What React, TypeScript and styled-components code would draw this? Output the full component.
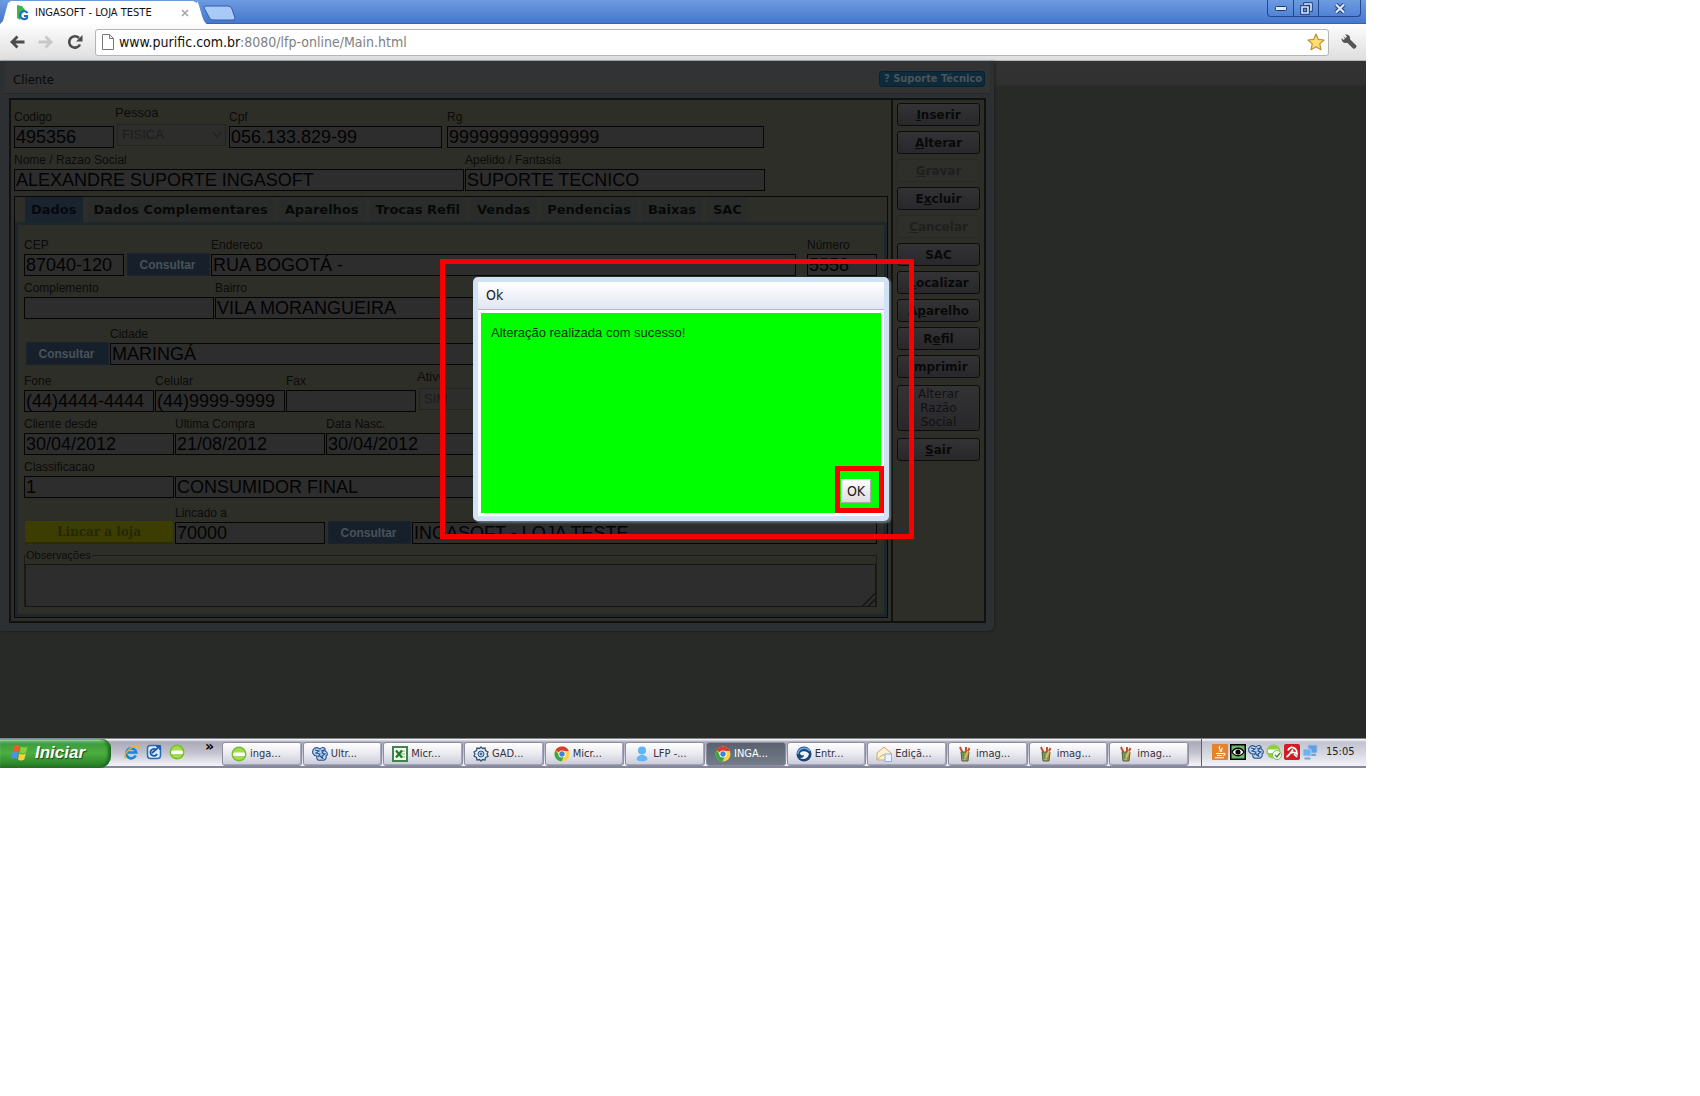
import React, { useId } from "react";
import styled, { createGlobalStyle, css } from "styled-components";

const ui = `"DejaVu Sans Condensed", "Noto Sans", sans-serif`;
const arial = `"Liberation Sans", Arial, sans-serif`;
const verdana = `"DejaVu Sans", Verdana, sans-serif`;

const GlobalStyle = createGlobalStyle`
  * { box-sizing: border-box; }
  body { margin: 0; background: #fff; font-family: ${arial}; }
  button, input, select, textarea { margin: 0; border-radius: 0; }
`;

const Desktop = styled.div`
  width: 100%;
  max-width: 1366px;
  background: #272a26;
`;

/* ---------- browser chrome ---------- */

const PlainButton = styled.button`
  display: flex;
  align-items: center;
  justify-content: center;
  padding: 0;
  border: 0;
  background: none;
`;

const TabStrip = styled.div`
  display: flex;
  align-items: flex-end;
  height: 24px;
  background: linear-gradient(#6d9be0, #4677cf);
  border-bottom: 1px solid #3a63ae;
`;

const BrowserTab = styled.div`
  display: flex;
  align-items: center;
  gap: 6px;
  width: 197px;
  height: 24px;
  margin-bottom: -1px;
  padding: 2px 8px 0 16px;
  background: #fff;
  clip-path: polygon(0 100%, 3px 88%, 8px 12%, 11px 4%, 193px 4%, 197px 12%, 100% 100%);
  font: 11px/14px ${ui};
  color: #111;
`;

const TabTitle = styled.span`
  flex: 1;
  white-space: nowrap;
`;

const TabFlare = styled.svg`
  flex: none;
  margin-bottom: -1px;
`;

const NewTab = styled(PlainButton)`
  align-self: flex-start;
  padding-top: 5px;
  margin-left: -4px;
`;

const WindowControls = styled.div`
  display: flex;
  align-self: flex-start;
  margin: 0 5px 0 auto;
  height: 17px;
  border: 1px solid #23478c;
  border-top: 0;
  border-radius: 0 0 4px 4px;
`;

const WindowControl = styled(PlainButton)<{ $wide?: boolean }>`
  width: ${(p) => (p.$wide ? 42 : 25)}px;
  & + & { border-left: 1px solid #23478c; }
`;

const Toolbar = styled.div`
  display: flex;
  align-items: center;
  gap: 11px;
  height: 37px;
  padding: 0 8px;
  background: linear-gradient(#fdfdfd, #dedede);
  border-bottom: 1px solid #b5b9b9;
`;

const Tool = styled(PlainButton)`
  width: 18px;
  height: 26px;
`;

const Omnibox = styled.div`
  display: flex;
  flex: 1;
  align-items: center;
  gap: 5px;
  height: 27px;
  padding: 0 3px 0 6px;
  background: #fff;
  border: 1px solid #b4b4b4;
  border-radius: 3px;
`;

const Address = styled.a`
  flex: 1;
  font: 14px/20px ${ui};
  color: #808080;
  text-decoration: none;
  white-space: nowrap;
  b { font-weight: 400; color: #111; }
`;

/* ---------- page ---------- */

const Page = styled.main`
  position: relative;
  padding-bottom: 107px;
  background: linear-gradient(#333 0, #303030 24px, #272a26 25px);
`;

const Window = styled.section`
  max-width: 994px;
  padding: 0 8px 8px 9px;
  background: #2c3033;
  border-radius: 0 0 6px 0;
  box-shadow: 1px 1px 3px #1d201e;
`;

const WindowHeader = styled.header`
  display: flex;
  align-items: center;
  justify-content: space-between;
  height: 33px;
  margin: 0 -4px 4px;
  padding: 3px 5px 0 8px;
  background: linear-gradient(#313335, #333);
  border-bottom: 1px solid #25282a;
`;

const WindowTitle = styled.h1`
  margin: 2px 0 0;
  font: 13px/16px ${ui};
  color: #090909;
`;

const Support = styled.button`
  height: 16px;
  padding: 0 2px 0 4px;
  border: 1px solid #0b202e;
  border-radius: 3px;
  background: #0e2b3d;
  font: bold 11px/14px ${ui};
  color: #4b5457;
`;

const Frame = styled.div`
  display: flex;
  border: 2px solid #11110f;
  background: #2e2e28;
`;

const Content = styled.div`
  flex: 1;
  min-width: 0;
  padding: 5px 3px 3px;
`;

const Sidebar = styled.nav`
  display: flex;
  flex-direction: column;
  gap: 5px;
  width: 93px;
  padding: 3px 4px;
  border-left: 2px solid #11110f;
`;

const Action = styled.button<{ $tall?: boolean }>`
  height: ${(p) => (p.$tall ? 46 : 23)}px;
  margin: ${(p) => (p.$tall ? "2px 0" : "0")};
  padding: ${(p) => (p.$tall ? "0 14px" : "0")};
  border: 1px solid #0d0d0d;
  border-radius: 3px;
  background: linear-gradient(#333335, #28282a);
  font: ${(p) => (p.$tall ? "12px/14px" : "bold 12px/14px")} ${verdana};
  color: ${(p) => (p.$tall ? "#111" : "#090909")};
  &:disabled {
    border-color: #292926;
    background: #2e2e2b;
    color: #1f1f1d;
  }
`;

const Row = styled.div<{ $space?: number; $gap?: number }>`
  display: flex;
  align-items: flex-end;
  gap: ${(p) => p.$gap ?? 1}px;
  margin-top: ${(p) => p.$space ?? 0}px;
`;

const FieldBox = styled.div<{ $w?: number; $start?: number }>`
  display: flex;
  flex-direction: column;
  ${(p) => (p.$w ? css`width: ${p.$w}px;` : css`flex: 1; min-width: 0;`)}
  margin-left: ${(p) => p.$start ?? 0}px;
`;

const Label = styled.label`
  height: 21px;
  font: 12px/25px ${arial};
  color: #0b0b0a;
  white-space: nowrap;
`;

const TextInput = styled.input`
  width: 100%;
  height: 22px;
  padding: 0 0 0 1px;
  border: 1px solid #050505;
  background: #2d2d2d;
  font: 18px/20px ${arial};
  color: #030303;
  outline: 0;
`;

const SelectBox = styled(FieldBox)`
  padding-bottom: 2px;
  ${Label} { height: 19px; line-height: 16px; font-size: 13px; margin-left: -2px; }
`;

const SelectInput = styled.select`
  appearance: none;
  width: 100%;
  height: 22px;
  padding: 0 4px;
  border: 1px solid #23231f;
  background: #2d2d2c;
  font: 13px/18px ${arial};
  color: #1c1c1c;
  opacity: 1;
`;

const SelectWrap = styled.div`
  display: grid;
  align-items: center;
  > * { grid-area: 1 / 1; }
  svg { justify-self: end; margin-right: 4px; pointer-events: none; }
`;

const Lookup = styled.button`
  width: 83px;
  height: 23px;
  margin: 0 0 0 2px;
  padding: 0 2px 0 0;
  border: 1px solid #19232d;
  background: #17202a;
  font: bold 12px/16px ${arial};
  color: #47525b;
`;

const LinkStore = styled.button`
  width: 148px;
  height: 23px;
  margin: 0 1px;
  padding: 0;
  border: 0;
  border-bottom: 2px solid #2d2c08;
  background: #3c3d00;
  font: bold 12px/16px "DejaVu Serif", serif;
  color: #25280a;
`;

const TabBox = styled.div`
  margin-top: 5px;
  border: 1px solid #080908;
`;

const Tabs = styled.div`
  display: flex;
  gap: 5px;
  height: 25px;
  padding-left: 10px;
`;

const PageTab = styled.button<{ $active?: boolean }>`
  padding: 0 6px;
  border: 0;
  background: ${(p) => (p.$active ? "#19242f" : "#2a2c2b")};
  font: bold 13px/24px ${verdana};
  color: ${(p) => (p.$active ? "#05090f" : "#080808")};
  white-space: nowrap;
`;

const Panel = styled.div`
  padding: 8px 7px 7px 6px;
  border: 3px solid #1d272b;
`;

const Notes = styled.fieldset`
  min-width: 0;
  margin: 5px 0 0;
  padding: 3px 0 0;
  border: 1px solid #1b1b18;
  border-bottom: 0;
  legend {
    padding: 0 1px;
    font: 11px/12px ${arial};
    color: #0c0c0b;
  }
`;

const NotesInput = styled.textarea`
  display: block;
  width: 100%;
  height: 43px;
  border: 1px solid #161616;
  background: #2d2d2d;
  resize: vertical;
  outline: 0;
  &::-webkit-resizer {
    background: linear-gradient(135deg, #2d2d2d 55%, #151515 55%, #151515 62%, #2d2d2d 62%, #2d2d2d 75%, #151515 75%, #151515 82%, #2d2d2d 82%);
  }
`;

/* ---------- message dialog ---------- */

const Overlay = styled.div`
  position: absolute;
  inset: 0;
  display: flex;
  align-items: center;
  justify-content: center;
  padding: 0 4px 2px 0;
`;

const Dialog = styled.section`
  position: relative;
  width: 416px;
  padding: 5px;
  background: #d0e2f3;
  border-radius: 5px;
  box-shadow: 2px 2px 2px #667078;
`;

const DialogHeader = styled.h2`
  margin: 0;
  padding: 0 8px;
  border-bottom: 1px solid #b4b8c8;
  background: linear-gradient(#fff, #e2e6f2);
  font: 14px/27px ${ui};
  color: #222;
`;

const DialogBody = styled.div`
  padding: 3px;
  background: #fff;
`;

const Message = styled.div`
  position: relative;
  display: flex;
  flex-direction: column;
  justify-content: space-between;
  min-height: 200px;
  padding: 10px;
  background: #0f0;
  font: 13px/20px ${arial};
  color: #063006;
  p { margin: 0; }
`;

const OkButton = styled.button`
  align-self: flex-end;
  width: 30px;
  height: 24px;
  padding: 0;
  border: 1px solid;
  border-color: #eee #a8a8ac #a8a8ac #eee;
  background: linear-gradient(#fff, #dcdce2);
  font: 14px/20px ${ui};
  color: #222;
`;

const Highlight = styled.span<{ $inset: string }>`
  position: absolute;
  inset: ${(p) => p.$inset};
  border: 5px solid #f90000;
  pointer-events: none;
`;

/* ---------- taskbar ---------- */

const Taskbar = styled.footer`
  display: flex;
  height: 30px;
  border-top: 1px solid #83838f;
  border-bottom: 2px solid #85889c;
  background: linear-gradient(#fff 0, #a9a9b8 3px, #c4c4d0 14px, #f2f2f6 26px);
`;

const Start = styled.button`
  display: flex;
  align-items: center;
  gap: 6px;
  width: 111px;
  height: 29px;
  padding: 0 0 2px 11px;
  border: 0;
  border-radius: 0 9px 12px 0;
  background: linear-gradient(#7fc77d 0, #3e9e3e 5px, #4bae3f 14px, #348f2f 23px, #257224);
  box-shadow: inset -3px 0 3px #1d6a22, inset 0 2px 1px #a5dfa0;
  font: italic bold 17px/24px ${arial};
  color: #fff;
  text-shadow: 1px 1px 1px #1a4a18;
`;

const QuickLaunch = styled.div`
  display: flex;
  align-items: center;
  gap: 7px;
  width: 111px;
  padding: 0 0 1px 12px;
`;

const More = styled.span`
  margin: 0 8px 12px auto;
  font: bold 14px/12px ${verdana};
  color: #000;
`;

const TaskList = styled.div`
  display: grid;
  grid-auto-flow: column;
  grid-auto-columns: 1fr;
  flex: 1;
  gap: 1px;
  min-width: 0;
  padding-top: 3px;
`;

const Task = styled.button<{ $active?: boolean }>`
  display: flex;
  align-items: center;
  gap: 3px;
  min-width: 0;
  height: 24px;
  padding: 0 0 0 8px;
  border: 1px solid #8d8fa0;
  border-radius: 3px;
  background: ${(p) =>
    p.$active ? "linear-gradient(#5a6270, #747c8a)" : "linear-gradient(#fff, #e6e6ee 12px, #c9cad9)"};
  box-shadow: ${(p) => (p.$active ? "none" : "inset -1px -1px 0 #a3a5b8")};
  font: 11px/16px ${ui};
  color: ${(p) => (p.$active ? "#fff" : "#33333b")};
  white-space: nowrap;
  svg { flex: none; }
`;

const Tray = styled.div`
  display: flex;
  align-items: center;
  gap: 2px;
  width: 165px;
  margin-left: 12px;
  padding: 0 0 1px 10px;
  border-left: 1px solid #5f6070;
  background: linear-gradient(#fff 0, #c3c3d0 3px, #d6d6e0 14px, #f0f0f5 26px);
  time {
    margin-left: 6px;
    font: 11px/16px ${ui};
    color: #222;
  }
`;

/* ---------- icons ---------- */

type IconName =
  | "ie" | "outlook" | "green" | "blob" | "excel" | "gear" | "chrome" | "person"
  | "bird" | "mail" | "cup" | "java" | "eye" | "check" | "avira" | "net";

const shapes: Record<IconName, React.ReactNode> = {
  ie: (
    <>
      <path d="M12.800 11.500A5 5 0 1 1 13.200 8.500H5" fill="none" stroke="#1c86d8" strokeWidth="2.600" />
      <path d="M2.500 14.500C-1 12 6 3 14 1.500c2-.3 1.500 2 .4 3.500" fill="none" stroke="#e8b52a" strokeWidth="1.300" />
    </>
  ),
  outlook: (
    <>
      <rect x="1.500" y="1.500" width="13" height="13" rx="3" fill="#dcebfa" stroke="#2d6cb5" strokeWidth="1.500" />
      <path d="M10.500 6A3.500 3.500 0 1 0 11 10M6 9l8-7M10 2h4v4" fill="none" stroke="#1d5ca8" strokeWidth="1.800" />
    </>
  ),
  green: (
    <>
      <circle cx="8" cy="8" r="7.500" fill="#76c225" />
      <circle cx="8" cy="8" r="6" fill="#a3dc52" />
      <rect x="2" y="6.500" width="12" height="3.500" rx="1.500" fill="#fff" />
    </>
  ),
  blob: (
    <g fill="#bcd5f1" stroke="#28538d" strokeWidth="1.100">
      <path d="M1 4C3 0 6 2 8 3c3-3 6-1 5 2 3 1 3 4 1 5 1 3-2 5-5 4-3 1-5-1-4-4C1 10 0 6 1 4z" />
      <path d="M3 4l4 1-3 2 4 1-2 3M9 5l3-1-2 3 3 1-3 2 1 3M7 9l3 3" fill="none" />
    </g>
  ),
  excel: (
    <>
      <rect x="1" y="1" width="14" height="14" fill="#f6fff4" stroke="#3f8746" strokeWidth="2" />
      <path d="M9 5h4M9 8h4M9 11h4" stroke="#7fb382" />
      <path d="M4 4.500l6 7M10 4.500l-6 7" stroke="#227a2f" strokeWidth="2.400" />
    </>
  ),
  gear: (
    <>
      <path d="M8 1l1.500 1.500L12 2l.5 2.500L15 6l-1 2 1 2.500-2.500 1L12 14l-2.500-.5L8 15l-1.500-1.500L4 14l-.5-2.500L1 10l1-2-1-2 2.500-1.500L4 2l2.500.5z" fill="#e3eef8" stroke="#35557a" strokeWidth="1.300" />
      <circle cx="8" cy="8" r="3" fill="#a9c6e0" stroke="#35557a" />
      <circle cx="8" cy="8" r="1" fill="#35557a" />
    </>
  ),
  chrome: (
    <>
      <circle cx="8" cy="8" r="7.500" fill="#fbd33a" />
      <path d="M8 8L1.500 4.250A7.500 7.500 0 0 1 14.800 5H8z" fill="#dd3b2d" />
      <path d="M1.500 4.250A7.500 7.500 0 0 0 7.500 15.500L10 10 5 9z" fill="#3aa64b" />
      <circle cx="8" cy="8" r="3.600" fill="#fff" />
      <circle cx="8" cy="8" r="2.700" fill="#3f83dd" />
    </>
  ),
  person: (
    <>
      <circle cx="8" cy="4.500" r="4" fill="#5db5f5" />
      <path d="M2.500 13.500c0-6 11-6 11 0-2 2.500-9 2.500-11 0z" fill="#62b7f4" />
    </>
  ),
  bird: (
    <>
      <circle cx="8" cy="8" r="7.500" fill="#1d4477" />
      <path d="M4 7c2-3 8-2 9 1-1 5-6 6-9 4 3 0 4-1 4-3-2 1-4 0-4-2z" fill="#eef5fc" />
      <path d="M2 8c0-6 8-8 12-3" fill="none" stroke="#5ba5e2" strokeWidth="1.800" />
    </>
  ),
  mail: (
    <>
      <path d="M1 7l7-6 7 6v7H1z" fill="#fdf1d3" stroke="#d1a765" />
      <path d="M1 14l5-5h4l5 5" fill="none" stroke="#d1a765" />
      <rect x="9" y="8" width="6.500" height="7.500" fill="#eef5ff" stroke="#8fb2dc" />
    </>
  ),
  cup: (
    <>
      <path d="M6 8L3 1M9 7V1M10 7l2.500-5" stroke="#c8502c" strokeWidth="2" />
      <path d="M4 6h8l-1 9H5z" fill="#8d9460" stroke="#5b6040" />
      <path d="M7 14l4-9" stroke="#e7b750" strokeWidth="2" />
      <path d="M6 7l1 6" stroke="#4f9a54" strokeWidth="1.500" />
    </>
  ),
  java: (
    <>
      <rect width="16" height="16" rx="1" fill="#e5822c" />
      <path d="M8 2c-3 3 2 3 0 6M10.500 4c-2 2 0 2-1 4M4 9.500h7c3-1 2 2 0 2M5 11.500h5M3 13.800h9" fill="none" stroke="#fff" strokeWidth="1.100" />
    </>
  ),
  eye: (
    <>
      <rect x=".75" y=".75" width="14.500" height="14.500" fill="#69b967" stroke="#000" strokeWidth="1.500" />
      <path d="M2 8c3-5 9-5 12 0-3 5-9 5-12 0z" fill="#fff" stroke="#000" strokeWidth="1.300" />
      <circle cx="8" cy="8" r="2.600" />
    </>
  ),
  check: (
    <>
      <circle cx="7.500" cy="7.500" r="7" fill="#8fd043" />
      <rect x="2" y="5.500" width="11" height="3.500" rx="1" fill="#fff" />
      <circle cx="11" cy="11" r="4.500" fill="#f4fff0" stroke="#78b858" />
      <path d="M9 11l2 2 3-4" fill="none" stroke="#3f8f2a" strokeWidth="1.300" />
    </>
  ),
  avira: (
    <>
      <rect width="16" height="16" rx="2" fill="#d01c22" />
      <path d="M2.500 13C6 11 7 8 9 5.500M4 6.500c2-5 9-4 9 3.500-2-2-4-2-6-1M10 10l3 3" fill="none" stroke="#fff" strokeWidth="1.700" />
    </>
  ),
  net: (
    <>
      <rect x="6" y="1" width="9" height="8" rx="1" fill="#5f9fe4" stroke="#a3c1e4" />
      <path d="M9 11h5" stroke="#7ba3d2" strokeWidth="2" />
      <rect x="1" y="5" width="8" height="7" rx="1" fill="#6fb0f0" stroke="#b5cfeb" />
      <path d="M2.500 14.500h6" stroke="#7ba3d2" strokeWidth="2" />
    </>
  ),
};

const Icon = ({ name }: { name: IconName }) => (
  <svg width="16" height="16" viewBox="0 0 16 16" aria-hidden="true">
    {shapes[name]}
  </svg>
);

const tasks: { icon: IconName; text: string; active?: boolean }[] = [
  { icon: "green", text: "inga..." },
  { icon: "blob", text: "Ultr..." },
  { icon: "excel", text: "Micr..." },
  { icon: "gear", text: "GAD..." },
  { icon: "chrome", text: "Micr..." },
  { icon: "person", text: "LFP -..." },
  { icon: "chrome", text: "INGA...", active: true },
  { icon: "bird", text: "Entr..." },
  { icon: "mail", text: "Ediçã..." },
  { icon: "cup", text: "imag..." },
  { icon: "cup", text: "imag..." },
  { icon: "cup", text: "imag..." },
];

const trayIcons: IconName[] = ["java", "eye", "blob", "check", "avira", "net"];

const pageTabs = [
  "Dados", "Dados Complementares", "Aparelhos", "Trocas Refil",
  "Vendas", "Pendencias", "Baixas", "SAC",
];

interface FieldProps {
  label: string;
  value: string;
  w?: number;
  start?: number;
  bare?: boolean;
}

function Field({ label, value, w, start, bare }: FieldProps) {
  const id = useId();
  return (
    <FieldBox $w={w} $start={start}>
      {!bare && <Label htmlFor={id}>{label}</Label>}
      <TextInput id={id} defaultValue={value} aria-label={bare ? label : undefined} />
    </FieldBox>
  );
}

function SelectField({ label, value, w, start }: FieldProps) {
  const id = useId();
  return (
    <SelectBox $w={w} $start={start}>
      <Label htmlFor={id}>{label}</Label>
      <SelectWrap>
        <SelectInput id={id} disabled defaultValue={value}>
          <option>{value}</option>
        </SelectInput>
        <svg width="10" height="8" viewBox="0 0 10 8" aria-hidden="true">
          <path d="M1 1l4 5 4-5" fill="none" stroke="#232323" strokeWidth="2" />
        </svg>
      </SelectWrap>
    </SelectBox>
  );
}

function BrowserChrome() {
  return (
    <header>
      <TabStrip>
        <BrowserTab>
          <svg width="13" height="16" viewBox="0 0 13 16" aria-hidden="true">
            <path d="M1 0l5 1 3 4-3 3-2 7-3-2z" fill="#3fb549" />
            <path d="M11.500 8A4 4 0 1 0 11 13V11H8" fill="none" stroke="#1f6fc0" strokeWidth="2.200" />
          </svg>
          <TabTitle>INGASOFT - LOJA TESTE</TabTitle>
          <PlainButton aria-label="Fechar guia">
            <svg width="8" height="8" viewBox="0 0 8 8">
              <path d="M1 1l6 6M7 1L1 7" stroke="#a2a2a2" strokeWidth="1.500" />
            </svg>
          </PlainButton>
        </BrowserTab>
        <TabFlare width="10" height="23" viewBox="0 0 10 23" aria-hidden="true">
          <path d="M0 0C3 4 5 21 10 23H0z" fill="#fff" />
        </TabFlare>
        <NewTab aria-label="Nova guia">
          <svg width="33" height="17" viewBox="0 0 33 17">
            <path d="M3 1h22q3 0 4 3l3 9q0 2-2 2H10q-3 0-4-3L1 3q0-2 2-2z" fill="#a9caf7" stroke="#315eaa" />
          </svg>
        </NewTab>
        <WindowControls>
          <WindowControl aria-label="Minimizar">
            <svg width="12" height="5" viewBox="0 0 12 5">
              <rect x=".5" y=".5" width="11" height="4" rx="1" fill="#dcebff" stroke="#1d3b74" />
            </svg>
          </WindowControl>
          <WindowControl aria-label="Restaurar">
            <svg width="13" height="13" viewBox="0 0 13 13" fill="none">
              <path d="M5 3V2h6v6h-1M2 5h6v6H2z" stroke="#1d3b74" strokeWidth="3.500" />
              <path d="M5 3V2h6v6h-1M2 5h6v6H2z" stroke="#dcebff" strokeWidth="1.600" />
            </svg>
          </WindowControl>
          <WindowControl $wide aria-label="Fechar">
            <svg width="12" height="11" viewBox="0 0 12 11">
              <path d="M2 1.500l8 8M10 1.500l-8 8" stroke="#1d3b74" strokeWidth="4" />
              <path d="M2 1.500l8 8M10 1.500l-8 8" stroke="#dcebff" strokeWidth="2.200" />
            </svg>
          </WindowControl>
        </WindowControls>
      </TabStrip>
      <Toolbar>
        <Tool aria-label="Voltar">
          <svg width="16" height="14" viewBox="0 0 16 14" fill="none" stroke="#4b4b4b" strokeWidth="2.800">
            <path d="M15.500 7H3M8.500 1.500L3 7l5.500 5.500" />
          </svg>
        </Tool>
        <Tool aria-label="Avançar">
          <svg width="16" height="14" viewBox="0 0 16 14" fill="none" stroke="#c8c8c8" strokeWidth="2.800">
            <path d="M.5 7H13M7.500 1.500L13 7l-5.500 5.500" />
          </svg>
        </Tool>
        <Tool aria-label="Recarregar">
          <svg width="16" height="16" viewBox="0 0 16 16">
            <path d="M12 4A5.700 5.700 0 1 0 13 10.500" fill="none" stroke="#4b4b4b" strokeWidth="2.600" />
            <path d="M15.500 1v6.500H9z" fill="#4b4b4b" />
          </svg>
        </Tool>
        <Omnibox>
          <svg width="12" height="16" viewBox="0 0 12 16" aria-hidden="true">
            <path d="M.5.5h7l4 4v11H.5zM7.500.5v4h4" fill="#fff" stroke="#777" />
          </svg>
          <Address href="#main">
            <b>www.purific.com.br</b>:8080/lfp-online/Main.html
          </Address>
          <PlainButton aria-label="Favorito">
            <svg width="18" height="18" viewBox="0 0 18 18">
              <path d="M9 1l2.300 5.400 5.700.6-4.300 3.900 1.300 5.800L9 13.700l-5 3 1.300-5.800L1 7l5.700-.6z" fill="#fde070" stroke="#c38d38" strokeWidth="1.200" strokeLinejoin="round" />
            </svg>
          </PlainButton>
        </Omnibox>
        <Tool aria-label="Ferramentas">
          <svg width="16" height="16" viewBox="0 0 16 16">
            <path d="M2 1.500L4.500 4 6 2.500 4 .6C7-.3 9.800 2 9 5.200l6.300 6.400c1 1.500-1.800 4-3.300 2.900L6.300 8.700C3 10 0 7 .7 4L2.500 6 4 4.500z" fill="#555" />
          </svg>
        </Tool>
      </Toolbar>
    </header>
  );
}

export default function App() {
  return (
    <>
      <GlobalStyle />
      <Desktop>
        <BrowserChrome />
        <Page id="main">
          <Window>
            <WindowHeader>
              <WindowTitle>Cliente</WindowTitle>
              <Support>? Suporte Técnico</Support>
            </WindowHeader>
            <Frame>
              <Content>
                <Row $gap={3}>
                  <Field label="Codigo" value="495356" w={100} />
                  <SelectField label="Pessoa" value="FISICA" w={109} />
                  <Field label="Cpf" value="056.133.829-99" w={213} />
                  <Field label="Rg" value="999999999999999" w={317} start={2} />
                </Row>
                <Row>
                  <Field label="Nome / Razao Social" value="ALEXANDRE SUPORTE INGASOFT" w={450} />
                  <Field label="Apelido / Fantasia" value="SUPORTE TECNICO" w={300} />
                </Row>
                <TabBox>
                  <Tabs role="tablist">
                    {pageTabs.map((t, i) => (
                      <PageTab key={t} role="tab" aria-selected={i === 0} $active={i === 0}>{t}</PageTab>
                    ))}
                  </Tabs>
                  <Panel>
                    <Row>
                      <Field label="CEP" value="87040-120" w={100} />
                      <Lookup>Consultar</Lookup>
                      <Field label="Endereco" value="RUA BOGOTÁ -" />
                      <Field label="Número" value="5558" w={70} start={10} />
                    </Row>
                    <Row>
                      <Field label="Complemento" value="" w={190} />
                      <Field label="Bairro" value="VILA MORANGUEIRA" />
                    </Row>
                    <Row $space={3}>
                      <Lookup>Consultar</Lookup>
                      <Field label="Cidade" value="MARINGÁ" />
                    </Row>
                    <Row $space={4}>
                      <Field label="Fone" value="(44)4444-4444" w={130} />
                      <Field label="Celular" value="(44)9999-9999" w={130} />
                      <Field label="Fax" value="" w={130} />
                      <SelectField label="Ativo" value="SIM" w={100} start={2} />
                    </Row>
                    <Row>
                      <Field label="Cliente desde" value="30/04/2012" w={150} />
                      <Field label="Ultima Compra" value="21/08/2012" w={150} />
                      <Field label="Data Nasc." value="30/04/2012" w={150} />
                    </Row>
                    <Row>
                      <Field label="Classificacao" value="1" w={150} />
                      <Field label="Descrição da classificacao" value="CONSUMIDOR FINAL" bare />
                    </Row>
                    <Row $space={3}>
                      <LinkStore disabled>Lincar a loja</LinkStore>
                      <Field label="Lincado a" value="70000" w={150} />
                      <Lookup>Consultar</Lookup>
                      <Field label="Loja" value="INGASOFT - LOJA TESTE" bare />
                    </Row>
                    <Notes>
                      <legend>Observações</legend>
                      <NotesInput aria-label="Observações" />
                    </Notes>
                  </Panel>
                </TabBox>
              </Content>
              <Sidebar>
                <Action><u>I</u>nserir</Action>
                <Action><u>A</u>lterar</Action>
                <Action disabled><u>G</u>ravar</Action>
                <Action>E<u>x</u>cluir</Action>
                <Action disabled><u>C</u>ancelar</Action>
                <Action>SAC</Action>
                <Action><u>L</u>ocalizar</Action>
                <Action>A<u>p</u>arelho</Action>
                <Action>R<u>e</u>fil</Action>
                <Action><u>I</u>mprimir</Action>
                <Action $tall>Alterar Razão Social</Action>
                <Action><u>S</u>air</Action>
              </Sidebar>
            </Frame>
          </Window>
          <Overlay>
            <Dialog role="dialog" aria-labelledby="dialog-title">
              <DialogHeader id="dialog-title">Ok</DialogHeader>
              <DialogBody>
                <Message>
                  <p>Alteração realizada com sucesso!</p>
                  <OkButton>OK</OkButton>
                  <Highlight $inset="153px -3px 0 354px" />
                </Message>
              </DialogBody>
              <Highlight $inset="-18px -25px -18px -33px" />
            </Dialog>
          </Overlay>
        </Page>
        <Taskbar>
          <Start>
            <svg width="18" height="17" viewBox="0 0 18 17" aria-hidden="true">
              <path d="M3 2q3-2 6 0L7.500 8q-3-2-6 0z" fill="#f0592a" />
              <path d="M10 2.500q3 2 6.500 0L15 8.500q-3 2-6.500 0z" fill="#8ccf3c" />
              <path d="M1.200 9q3-2 6 0L6 15q-3-2-6 0z" fill="#4f8ff0" />
              <path d="M8.300 9.500q3 2 6.500 0l-1.500 6q-3 2-6.300 0z" fill="#fbd23c" />
            </svg>
            Iniciar
          </Start>
          <QuickLaunch>
            <Icon name="ie" />
            <Icon name="outlook" />
            <Icon name="green" />
            <More>»</More>
          </QuickLaunch>
          <TaskList>
            {tasks.map((t, i) => (
              <Task key={i} $active={t.active}>
                <Icon name={t.icon} />
                {t.text}
              </Task>
            ))}
          </TaskList>
          <Tray>
            {trayIcons.map((n) => <Icon key={n} name={n} />)}
            <time>15:05</time>
          </Tray>
        </Taskbar>
      </Desktop>
    </>
  );
}
